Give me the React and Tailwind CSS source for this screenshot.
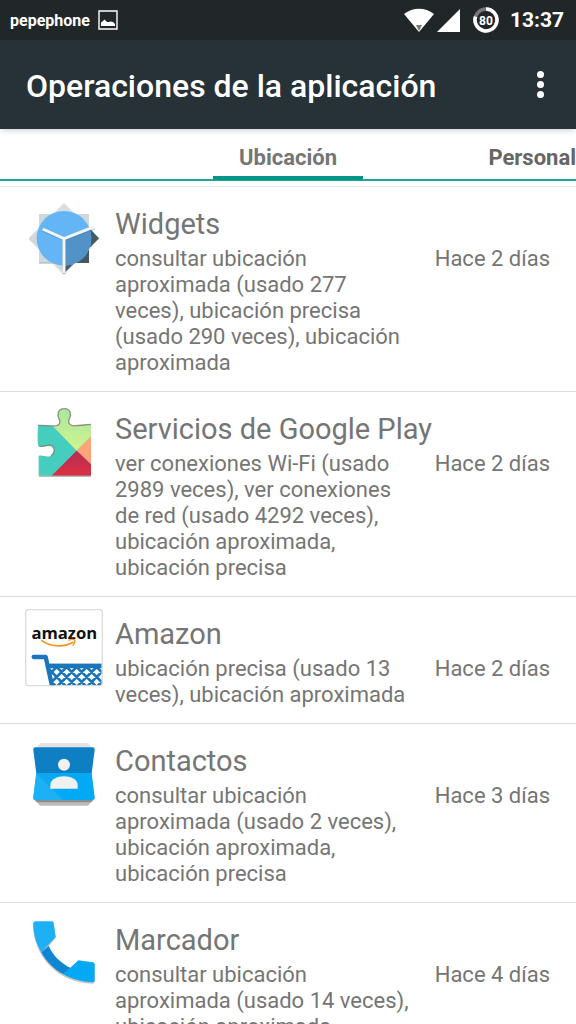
function WidgetsIcon() {
  return (
    <svg viewBox="18 15 228 228" className="size-[76px] shrink-0" aria-hidden="true">
      <path d="M132 29 237 133 132 240 26 133Z" fill="#b9c2c6" opacity=".5" />
      <path d="M132 25 237 130 132 235 26 130Z" fill="#cfd8dc" />
      <path d="M57 57H207V204H57Z" fill="#cfd8dc" />
      <path d="M132 25 100 57H164Z" fill="#d8dfe2" />
      <path d="M57 202H132V206H57Z" fill="#b3bcc0" />
      <path d="M132 130 207 98 237 130 207 160V204H163L132 235Z" fill="#455a64" />
      <path d="M190 57H207V98L200 102Z" fill="#cfd8dc" />
      <circle cx="132" cy="130" r="82" fill="#64b5f6" />
      <path d="M132 130 207 98A82 82 0 0 1 132 212Z" fill="#5292c7" />
      <path d="M68 105 132 133 224 98M132 133V236" fill="none" stroke="#3f6f9a" strokeOpacity=".3" strokeWidth="11" />
      <path d="M68 102 132 131 224 95M132 131V234" fill="none" stroke="#f5f5f5" strokeWidth="9" />
    </svg>
  );
}

function PlayServicesIcon() {
  return (
    <svg viewBox="18 15 228 228" className="size-[76px] shrink-0" aria-hidden="true">
      <defs>
        <clipPath id="puzzle">
          <path d="M54 76C75 75 95 80 110 77C122 73 121 64 117 56C111 47 112 26 133 26C154 26 154 47 148 56C144 65 146 75 158 77C175 78 195 74 213 73V227H56V168C66 163 80 174 93 167C104 160 106 146 96 138C83 130 70 144 56 138C51 132 52 96 54 76Z" />
        </clipPath>
        <linearGradient id="puzzleGreen" x2="0" y2="1">
          <stop stopColor="#a8e6a3" />
          <stop offset="1" stopColor="#d0f58c" />
        </linearGradient>
        <linearGradient id="puzzleRed" x2="0" y2="1">
          <stop stopColor="#b52b55" />
          <stop offset="1" stopColor="#df3040" />
        </linearGradient>
      </defs>
      <path d="M57 228H213" stroke="#777" strokeWidth="3" />
      <g clipPath="url(#puzzle)">
        <path d="M50 20H220V230H50Z" fill="#45cdbd" />
        <path d="M100 80 105 20H220V103L170 152Z" fill="url(#puzzleGreen)" />
        <path d="M170 152 215 107V195Z" fill="#ffa378" />
        <path d="M170 152 215 195V230H92Z" fill="url(#puzzleRed)" />
      </g>
      <path
        d="M54 76C75 75 95 80 110 77C122 73 121 64 117 56C111 47 112 26 133 26C154 26 154 47 148 56C144 65 146 75 158 77C175 78 195 74 213 73M56 138C70 144 83 130 96 138C106 146 104 160 93 167"
        fill="none"
        stroke="#7d7468"
        strokeOpacity=".75"
        strokeWidth="4"
      />
    </svg>
  );
}

function AmazonIcon() {
  return (
    <svg viewBox="18 30 228 228" className="size-[76px] shrink-0 overflow-visible" aria-hidden="true">
      <defs>
        <clipPath id="cart">
          <path d="M20 150H245V256H20Z" />
        </clipPath>
        <clipPath id="basket">
          <path d="M80 190H245V256H98Z" />
        </clipPath>
      </defs>
      <rect x="17" y="29" width="230" height="228" rx="8" fill="#fff" stroke="#dcdcdc" strokeWidth="4" />
      <text x="133" y="116" textAnchor="middle" fontFamily="Open Sans, sans-serif" fontWeight="700" fontSize="50" fill="#111">
        amazon
      </text>
      <path d="M64 121C92 141 132 143 160 126" fill="none" stroke="#f7941d" strokeWidth="5" />
      <path d="M145 121C154 117 163 118 164 120C166 124 162 132 158 137" fill="none" stroke="#f7941d" strokeWidth="4" />
      <g clipPath="url(#cart)">
        <path d="M41 171H77L98 266" fill="none" stroke="#1b75bb" strokeWidth="13" strokeLinecap="round" strokeLinejoin="round" />
      </g>
      <g clipPath="url(#basket)" stroke="#1b75bb" fill="none">
        <path d="M78 197H246" strokeWidth="15" />
        <path
          d="M80 201 140 261M110 201 170 261M140 201 200 261M170 201 230 261M200 201 260 261M230 201 290 261M50 201 110 261M110 201 50 261M140 201 80 261M170 201 110 261M200 201 140 261M230 201 170 261M260 201 200 261M290 201 230 261"
          strokeWidth="8"
        />
      </g>
    </svg>
  );
}

function ContactsIcon() {
  return (
    <svg viewBox="18 21 228 228" className="size-[76px] shrink-0" aria-hidden="true">
      <path d="M60 39H205L214 53H50Z" fill="#e3e3e3" />
      <path d="M44 208H220L206 225Q204 227 200 227H64Q60 227 58 225Z" fill="#bdbdbd" />
      <path d="M44 210H220L214 217H50Z" fill="#8e8e8e" />
      <path d="M46 52H218Q225 52 224 60L215 131H49L40 60Q39 52 46 52Z" fill="#0f7fc4" />
      <path d="M49 129H215L224 202Q225 210 218 210H46Q39 210 40 202Z" fill="#03a9f4" />
      <path d="M49 129 129 210H46Q39 210 40 202Z" fill="#1cb0f5" />
      <path d="M49 129H91V171Z" fill="#0fa6ee" />
      <circle cx="132" cy="104" r="18" fill="#f1f1f1" />
      <path d="M91 176V165C91 130 173 130 173 165V176Z" fill="#f1f1f1" />
    </svg>
  );
}

function DialerIcon() {
  return (
    <svg viewBox="18 18 228 228" className="size-[76px] shrink-0" aria-hidden="true">
      <path
        d="M46 37H97Q100 37 101 42L107 84 84 112C100 142 123 162 151 176L177 154 218 160Q224 160 224 164V213Q224 221 217 221C115 221 39 139 39 43Q39 37 46 37Z"
        fill="#9e9e9e"
        opacity=".6"
      />
      <path d="M64 127 86 108C101 140 124 160 152 174L130 193C102 178 79 155 64 127Z" fill="#0f86d1" />
      <path d="M46 34H96Q100 34 101 39L107 81 64 127C47 100 40 71 40 40Q40 34 46 34Z" fill="#1eb0f5" />
      <path d="M130 193 175 151 218 157Q224 157 224 162V211Q224 217 218 217C184 215 156 208 130 193Z" fill="#03a9f4" />
    </svg>
  );
}

const apps = [
  {
    name: 'Widgets',
    Icon: WidgetsIcon,
    ops: 'consultar ubicación aproximada (usado 277 veces), ubicación precisa (usado 290 veces), ubicación aproximada',
    time: 'Hace 2 días',
  },
  {
    name: 'Servicios de Google Play',
    Icon: PlayServicesIcon,
    ops: 'ver conexiones Wi-Fi (usado 2989 veces), ver conexiones de red (usado 4292 veces), ubicación aproximada, ubicación precisa',
    time: 'Hace 2 días',
  },
  {
    name: 'Amazon',
    Icon: AmazonIcon,
    ops: 'ubicación precisa (usado 13 veces), ubicación aproximada',
    time: 'Hace 2 días',
  },
  {
    name: 'Contactos',
    Icon: ContactsIcon,
    ops: 'consultar ubicación aproximada (usado 2 veces), ubicación aproximada, ubicación precisa',
    time: 'Hace 3 días',
  },
  {
    name: 'Marcador',
    Icon: DialerIcon,
    ops: 'consultar ubicación aproximada (usado 14 veces), ubicación aproximada',
    time: 'Hace 4 días',
  },
];

function StatusBar() {
  return (
    <div className="flex h-10 shrink-0 items-center bg-[#212629] pr-3 pl-[10px] text-white">
      <span className="pt-[2px] text-base font-bold">pepephone</span>
      <svg viewBox="0 0 20 20" className="ml-2 size-5" aria-hidden="true">
        <path d="M1 1H19V19H1Z" fill="none" stroke="#fff" strokeWidth="1.4" />
        <path d="M3 16V12.500L5 11 6.500 9.500 9 12 11 12 13 11.500 15 12 17 14V16Z" fill="#fff" />
      </svg>
      <div className="ml-auto flex items-center">
        <svg viewBox="0 0 32 24" className="h-6 w-8" aria-hidden="true">
          <path d="M1 6C10-1 22-1 31 6L16 24Z" fill="#fff" />
          <path d="M13 17H19L16 23Z" fill="#777" />
        </svg>
        <svg viewBox="0 0 24 24" className="ml-[2px] size-6" aria-hidden="true">
          <path d="M23 1V24H0Z" fill="#fff" />
        </svg>
        <svg viewBox="0 0 26 26" className="ml-3 size-[26px]" aria-hidden="true">
          <circle cx="13" cy="13" r="11" fill="none" stroke="#777" strokeWidth="3.500" />
          <path d="M13 2A11 11 0 1 1 2.500 9.600" fill="none" stroke="#fff" strokeWidth="3.500" />
          <text x="13" y="17.500" textAnchor="middle" fontFamily="Roboto, sans-serif" fontWeight="700" fontSize="12" fill="#fff">
            80
          </text>
        </svg>
        <span className="ml-[11px] pt-[2px] text-[21px] font-bold">13:37</span>
      </div>
    </div>
  );
}

function AppRow({ app }) {
  const { name, Icon, ops, time } = app;

  return (
    <li className="flex border-b border-[#dcdcdc] px-[26px] pt-[13px] pb-[15px]">
      <Icon />
      <div className="ml-[13px] min-w-0 flex-1 pt-[6px]">
        <h2 className="mb-1 text-[29px] leading-9 whitespace-nowrap">{name}</h2>
        <div className="flex text-[22px] leading-[26px]">
          <p className="min-w-0 flex-1">{ops}</p>
          <span className="ml-4 shrink-0">{time}</span>
        </div>
      </div>
    </li>
  );
}

function App() {
  return (
    <div className="flex h-screen flex-col overflow-hidden bg-white font-[Roboto,sans-serif] text-[#757575]">
      <StatusBar />
      <header className="z-10 flex h-[89px] shrink-0 items-center justify-between bg-[#263238] px-[26px] text-white shadow-md">
        <h1 className="pt-[3px] text-[32px] font-medium whitespace-nowrap">Operaciones de la aplicación</h1>
        <button type="button" aria-label="Más opciones" className="flex flex-col gap-[3px] px-[6px]">
          <span className="size-[7px] rounded-full bg-white" />
          <span className="size-[7px] rounded-full bg-white" />
          <span className="size-[7px] rounded-full bg-white" />
        </button>
      </header>

      <nav className="grid h-[52px] shrink-0 grid-cols-[1fr_auto_1fr] border-b-2 border-[#26a69a] text-[22px] font-bold whitespace-nowrap">
        <span />
        <button type="button" className="-mb-px border-b-4 border-[#009688] px-[26px] pt-[9px]">
          Ubicación
        </button>
        <button type="button" className="justify-self-end pt-[6px] text-[#666666]">
          Personal
        </button>
      </nav>

      <ul className="mt-[5px] min-h-0 flex-1 overflow-y-auto border-t border-[#e8e8e8] [scrollbar-width:none]">
        {apps.map((app) => (
          <AppRow key={app.name} app={app} />
        ))}
      </ul>
    </div>
  );
}

export default App;
